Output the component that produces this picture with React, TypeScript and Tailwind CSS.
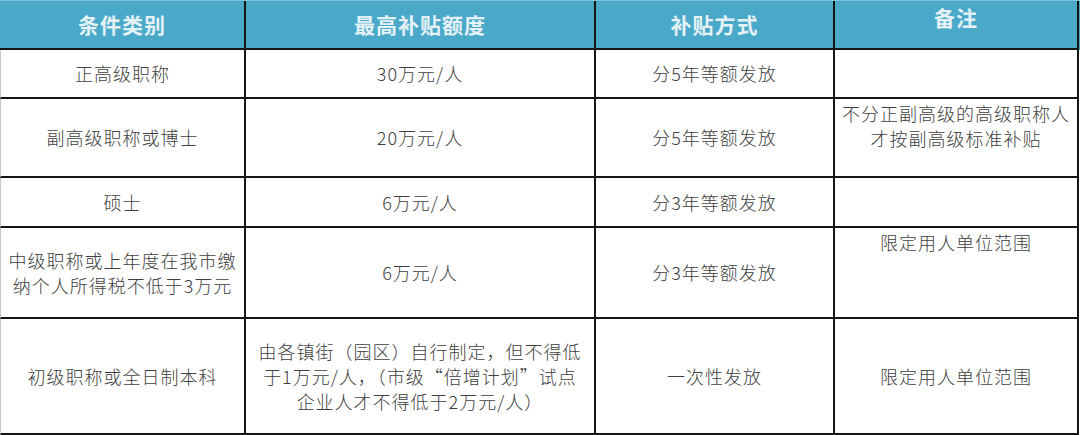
const rows: {
  h: string;
  cells: { text: string[]; top?: boolean }[];
}[] = [
  {
    h: "h-[49px]",
    cells: [
      { text: ["正高级职称"] },
      { text: ["30万元/人"] },
      { text: ["分5年等额发放"] },
      { text: [] },
    ],
  },
  {
    h: "h-[79px]",
    cells: [
      { text: ["副高级职称或博士"] },
      { text: ["20万元/人"] },
      { text: ["分5年等额发放"] },
      { text: ["不分正副高级的高级职称人", "才按副高级标准补贴"], top: true },
    ],
  },
  {
    h: "h-[50px]",
    cells: [
      { text: ["硕士"] },
      { text: ["6万元/人"] },
      { text: ["分3年等额发放"] },
      { text: [] },
    ],
  },
  {
    h: "h-[91px]",
    cells: [
      { text: ["中级职称或上年度在我市缴", "纳个人所得税不低于3万元"] },
      { text: ["6万元/人"] },
      { text: ["分3年等额发放"] },
      { text: ["限定用人单位范围"], top: true },
    ],
  },
  {
    h: "h-[116px]",
    cells: [
      { text: ["初级职称或全日制本科"] },
      {
        text: [
          "由各镇街（园区）自行制定，但不得低",
          "于1万元/人，（市级“倍增计划”试点",
          "企业人才不得低于2万元/人）",
        ],
      },
      { text: ["一次性发放"] },
      { text: ["限定用人单位范围"] },
    ],
  },
];

const headers = ["条件类别", "最高补贴额度", "补贴方式", "备注"];
const widths = ["w-[246px]", "w-[350px]", "w-[239px]", "w-[244px]"];

export default function App() {
  return (
    <div
      className="w-[1080px] h-[435px] bg-white overflow-hidden"
      style={{ fontFamily: '"Noto Sans CJK SC", "Noto Sans", sans-serif' }}
    >
      <div className="flex h-[50px] bg-[#4aa9c8] border-t border-[#7cc4db]">
        {headers.map((h, i) => (
          <div
            key={h}
            className={`${widths[i]} flex justify-center border-r-2 border-b-2 border-[#151515] ${
              i === 3 ? "items-start pt-[1px]" : "items-center"
            }`}
          >
            <span className="text-[21px] font-bold tracking-[1px] text-[#e4f2f7]">
              {h}
            </span>
          </div>
        ))}
      </div>
      {rows.map((r, ri) => (
        <div key={ri} className={`flex ${r.h}`}>
          {r.cells.map((c, ci) => (
            <div
              key={ci}
              className={`${widths[ci]} flex justify-center border-r-2 border-b-2 border-[#151515] ${
                ci === 0 ? "border-l border-l-[#c8c8c8]" : ""
              } ${c.top ? "items-start pt-[2px]" : "items-center"}`}
            >
              <div className="text-center whitespace-nowrap text-[18px] font-light leading-[25px] tracking-[1px] text-[#404040]">
                {c.text.map((t, ti) => (
                  <div key={ti}>{t}</div>
                ))}
              </div>
            </div>
          ))}
        </div>
      ))}
    </div>
  );
}
